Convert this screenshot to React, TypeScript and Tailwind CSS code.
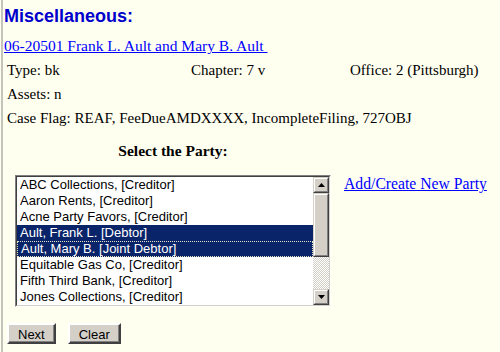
import React from 'react';

interface Party {
  label: string;
  selected?: boolean;
  focused?: boolean;
}

const parties: Party[] = [
  { label: 'ABC Collections, [Creditor]' },
  { label: 'Aaron Rents, [Creditor]' },
  { label: 'Acne Party Favors, [Creditor]' },
  { label: 'Ault, Frank L. [Debtor]', selected: true },
  { label: 'Ault, Mary B. [Joint Debtor]', selected: true, focused: true },
  { label: 'Equitable Gas Co, [Creditor]' },
  { label: 'Fifth Third Bank, [Creditor]' },
  { label: 'Jones Collections, [Creditor]' },
];

const serif = "font-['Liberation_Serif','Times_New_Roman',serif]";
const sans = "font-['Liberation_Sans',Arial,sans-serif]";

function Arrow({ up }: { up?: boolean }) {
  return (
    <svg width="7" height="4" viewBox="0 0 7 4" className="block">
      {up ? <polygon points="3.5,0 7,4 0,4" fill="#000" /> : <polygon points="0,0 7,0 3.5,4" fill="#000" />}
    </svg>
  );
}

function ScrollButton({ up }: { up?: boolean }) {
  return (
    <div className="h-[16px] w-[16px] border border-t-[#d4d0c8] border-l-[#d4d0c8] border-b-[#404040] border-r-[#404040] bg-[#d4d0c8]">
      <div className="flex h-full w-full items-center justify-center border border-t-white border-l-white border-b-[#808080] border-r-[#808080]">
        <Arrow up={up} />
      </div>
    </div>
  );
}

function PartyList() {
  return (
    <div className="h-[132px] w-[316px] border border-t-[#808080] border-l-[#808080] border-b-white border-r-white">
      <div className="flex h-full w-full border border-t-[#404040] border-l-[#404040] border-b-[#d4d0c8] border-r-[#d4d0c8] bg-white">
        <div className={`flex-1 ${sans} text-[13px] leading-[16px]`}>
          {parties.map((p) => (
            <div
              key={p.label}
              className={
                'h-[16px] whitespace-nowrap pl-[3px] ' +
                (p.selected ? 'bg-[#0a246a] text-white ' : 'text-black ') +
                (p.focused ? 'border border-dotted border-[#e8e4c8] pl-[2px] leading-[14px]' : '')
              }
            >
              {p.label}
            </div>
          ))}
        </div>
        <div className="flex w-[16px] flex-col">
          <ScrollButton up />
          <div className="h-[64px] w-[16px] border border-t-[#d4d0c8] border-l-[#d4d0c8] border-b-[#404040] border-r-[#404040] bg-[#d4d0c8]">
            <div className="h-full w-full border border-t-white border-l-white border-b-[#808080] border-r-[#808080]" />
          </div>
          <div className="h-[32px] w-[16px] bg-[image:repeating-conic-gradient(#d4d0c8_0_25%,#ffffff_0_50%)] bg-[length:2px_2px]" />
          <ScrollButton />
        </div>
      </div>
    </div>
  );
}

function WinButton({ children }: { children: React.ReactNode }) {
  return (
    <button
      type="button"
      className={`h-[21px] border-2 border-t-white border-l-white border-b-[#404040] border-r-[#404040] bg-[#d4d0c8] px-[9px] pt-[2px] ${sans} text-[13px] leading-[15px] text-black shadow-[inset_-1px_-1px_#808080]`}
    >
      {children}
    </button>
  );
}

export default function App() {
  return (
    <div className="h-[352px] w-[500px] overflow-hidden bg-[#fffff0] pl-[1px]">
      <div className={`h-full border-l-2 border-[#c4c4bc] pl-[1px] text-black ${serif}`}>
        <h1 className={`pt-[6px] ${sans} text-[18px] font-bold leading-[21px] text-[#0000cc]`}>Miscellaneous:</h1>

        <div className="mt-[10px] text-[15.5px] leading-[18px]">
          <a href="#" className="text-[#0000ff] underline">
            06-20501 Frank L. Ault and Mary B. Ault&nbsp;
          </a>
        </div>

        <div className="mt-[3px] pl-[3px] text-[15px] leading-[18px]">
          <div className="flex h-[24px] items-center">
            <div className="w-[184px]">Type: bk</div>
            <div className="w-[159px]">Chapter: 7 v</div>
            <div>Office: 2 (Pittsburgh)</div>
          </div>
          <div className="flex h-[24px] items-center">Assets: n</div>
          <div className="flex h-[24px] items-center">Case Flag: REAF, FeeDueAMDXXXX, IncompleteFiling, 727OBJ</div>
        </div>

        <div className="ml-[11px] mt-[12px] w-[316px] text-center text-[15.5px] font-bold leading-[18px]">
          Select the Party:
        </div>

        <div className="ml-[11px] mt-[15px] flex items-start">
          <PartyList />
          <a href="#" className="ml-[13px] text-[15.7px] leading-[18px] text-[#0000ff] underline">
            Add/Create New Party
          </a>
        </div>

        <div className="ml-[3px] mt-[16px] flex gap-[12px]">
          <WinButton>Next</WinButton>
          <WinButton>Clear</WinButton>
        </div>
      </div>
    </div>
  );
}
